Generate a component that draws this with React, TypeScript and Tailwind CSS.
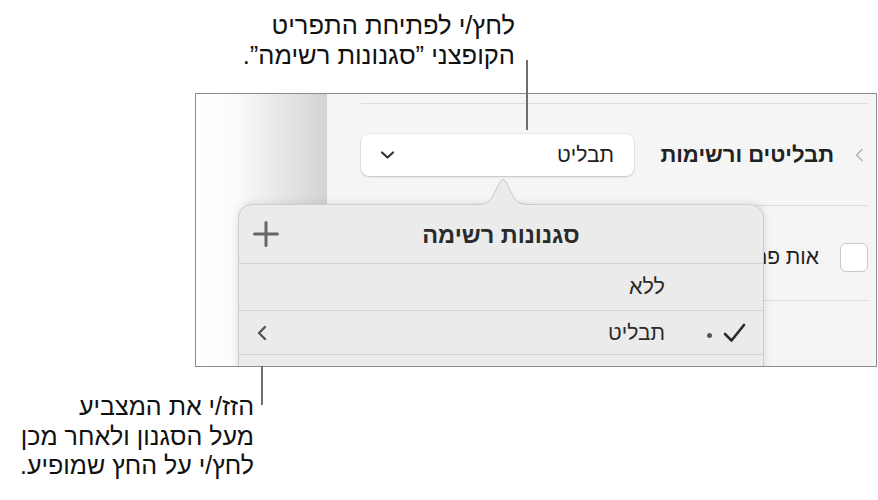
export default function App() {
  return (
    <div className="relative w-[878px] h-[500px] overflow-hidden bg-white font-['Liberation_Sans','DejaVu_Sans',sans-serif] text-[#111]">
      {/* top callout */}
      <div dir="rtl" className="w-[515px] pt-[10px] text-[25.5px] leading-[30px]">
        <p>לחץ/י לפתיחת התפריט</p>
        <p>הקופצני ”סגנונות רשימה”.</p>
      </div>

      {/* screenshot frame */}
      <div className="relative mt-[23px] ml-[195px] flex h-[274px] w-[682px] overflow-hidden border border-[#8c8c8c]">
        <div className="w-[131px] bg-gradient-to-r from-white via-[#fbfbfb] via-[30%] to-[#d3d3d3]" />
        <div className="flex flex-1 flex-col bg-[#f5f5f5] pt-[9px] pl-[34px] pr-[8px]">
          <div className="h-px bg-[#dcdcdc]" />
          <div dir="rtl" className="flex h-[101px] items-center pr-[4px]">
            <svg width="10" height="14" viewBox="0 0 10 14" className="shrink-0">
              <path d="M8 1.5 L2.5 7 L8 12.5" fill="none" stroke="#b3b3b3" strokeWidth="1.6" strokeLinecap="round" strokeLinejoin="round" />
            </svg>
            <span className="mr-[20px] text-[22px] font-bold text-[#222]">תבליטים ורשימות</span>
            <div className="mr-auto flex h-[42px] w-[273px] items-center justify-between rounded-[8px] bg-white pr-[20px] pl-[18px] shadow-[0_0_0_0.5px_rgba(0,0,0,0.08),0_1px_2px_rgba(0,0,0,0.18)]">
              <span className="text-[21px] text-[#1e1e1e]">תבליט</span>
              <svg width="17" height="10" viewBox="0 0 17 10">
                <path d="M3 2.5 L8.5 7.5 L14 2.5" fill="none" stroke="#333" strokeWidth="2.2" strokeLinecap="round" strokeLinejoin="round" />
              </svg>
            </div>
          </div>
          <div className="h-px bg-[#dcdcdc]" />
          <div dir="rtl" className="flex h-[94px] items-center pt-[8px]">
            <div className="h-[29px] w-[28px] shrink-0 rounded-[6px] border border-[#c9c9c9] bg-white" />
            <span className="mr-[21px] text-[21px] text-[#1e1e1e]">אות פתיחה</span>
          </div>
          <div className="h-px bg-[#dcdcdc]" />
        </div>

        {/* popover arrow */}
        <svg width="54" height="30" viewBox="0 0 54 30" className="absolute left-[280px] top-[83px] z-20">
          <path d="M0 27.5 C9 27.5 13 25.5 16 20.5 L24 5 Q27 0.5 30 5 L38 20.5 C41 25.5 45 27.5 54 27.5 L54 30 L0 30 Z" fill="#ebebeb" />
          <path d="M0 27.5 C9 27.5 13 25.5 16 20.5 L24 5 Q27 0.5 30 5 L38 20.5 C41 25.5 45 27.5 54 27.5" fill="none" stroke="#c8c8c8" strokeWidth="1" />
        </svg>

        {/* popover */}
        <div className="absolute left-[42px] top-[110px] z-10 h-[200px] w-[526px] rounded-[14px] border border-[#cdcdcd] bg-[#ebebeb] shadow-[0_0_8px_rgba(0,0,0,0.12)]">
          <div className="grid h-[59px] grid-cols-[1fr_auto_1fr] items-center border-b border-[#d2d2d2]">
            <div className="pl-[14px]">
              <svg width="26" height="26" viewBox="0 0 26 26">
                <path d="M13 1.5 V24.5 M1.5 13 H24.5" stroke="#666" strokeWidth="3" strokeLinecap="round" />
              </svg>
            </div>
            <span dir="rtl" className="pt-[4px] text-[23.5px] font-bold text-[#2a2a2a]">סגנונות רשימה</span>
            <div />
          </div>
          <div dir="rtl" className="flex h-[47px] items-center border-b border-[#d2d2d2] pr-[98px]">
            <span className="text-[21.5px] text-[#2b2b2b]">ללא</span>
          </div>
          <div dir="rtl" className="flex h-[44px] items-center border-b border-[#d2d2d2] pr-[17px] pl-[17px]">
            <svg width="23" height="20" viewBox="0 0 23 20" className="shrink-0">
              <path d="M2 11 L8.5 17.5 L21 2" fill="none" stroke="#2b2b2b" strokeWidth="2.6" strokeLinecap="round" strokeLinejoin="round" />
            </svg>
            <span className="mr-[11px] mt-[6px] h-[5px] w-[5px] shrink-0 rounded-full bg-[#555]" />
            <span className="mr-[42px] text-[21px] text-[#2b2b2b]">תבליט</span>
            <svg width="12" height="16" viewBox="0 0 12 16" className="mr-auto shrink-0">
              <path d="M9 2 L3 8 L9 14" fill="none" stroke="#555" strokeWidth="2.4" strokeLinecap="round" strokeLinejoin="round" />
            </svg>
          </div>
        </div>
      </div>

      {/* bottom callout */}
      <div dir="rtl" className="mt-[25px] w-[254px] text-[25px] leading-[29.5px]">
        <p>הזז/י את המצביע</p>
        <p>מעל הסגנון ולאחר מכן</p>
        <p>לחץ/י על החץ שמופיע.</p>
      </div>

      {/* leader lines */}
      <div className="absolute left-[526px] top-[60px] h-[70px] w-[1.5px] bg-[#6e6e6e]" />
      <div className="absolute left-[261px] top-[357px] h-[48px] w-[1.5px] bg-[#6e6e6e]" />
    </div>
  );
}
